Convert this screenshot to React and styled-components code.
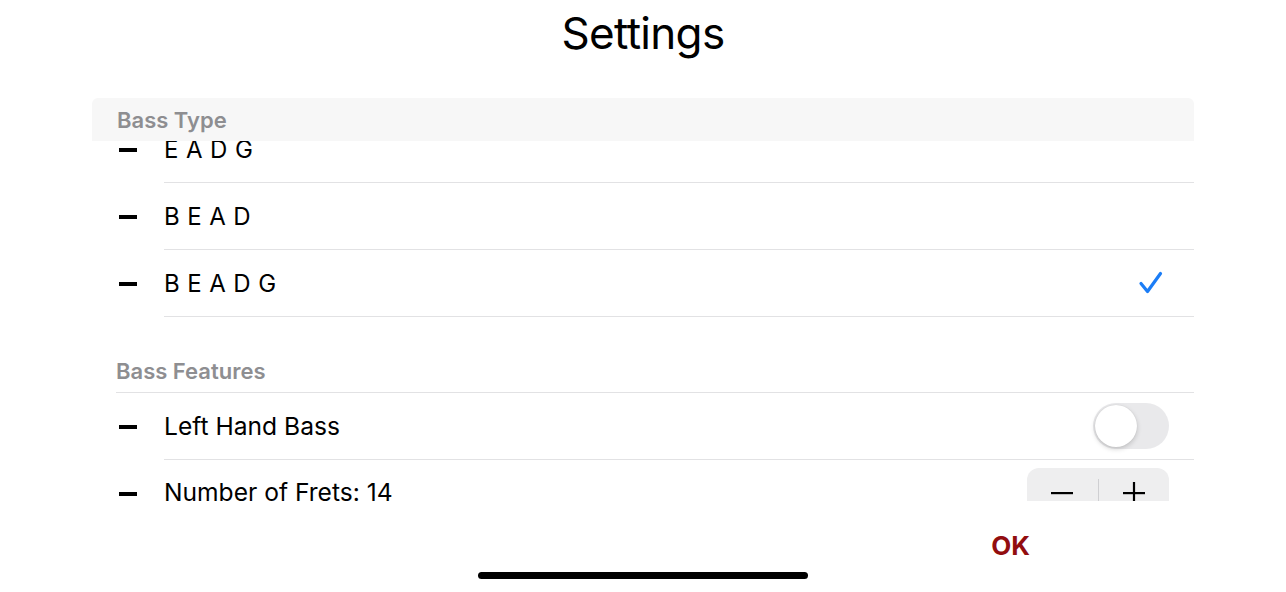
import React from "react";
import styled, { createGlobalStyle } from "styled-components";

const Global = createGlobalStyle`
  html, body { margin: 0; padding: 0; background: #ffffff; }
  body { font-family: "Inter", "Noto Sans", "Liberation Sans", sans-serif; -webkit-font-smoothing: antialiased; }
  * { box-sizing: border-box; }
`;

const Page = styled.div`
  width: 1286px;
  height: 592px;
  display: flex;
  flex-direction: column;
  background: #fff;
  overflow: hidden;
`;

const TitleBar = styled.header`
  height: 98px;
  display: flex;
  justify-content: center;
  padding-top: 6px;
`;

const Title = styled.h1`
  margin: 0;
  font-size: 44px;
  font-weight: 400;
  line-height: 54px;
  letter-spacing: -0.7px;
  color: #000;
`;

const ListArea = styled.section`
  margin: 0 92px;
  height: 403px;
  flex: none;
  display: flex;
  flex-direction: column;
  overflow: hidden;
`;

const StickyHeader = styled.div`
  height: 43px;
  flex: none;
  background: #f7f7f7;
  border-radius: 6px 6px 0 0;
  padding-left: 25px;
  display: flex;
  align-items: center;
  font-size: 22px;
  font-weight: 600;
  color: #8e8e91;
  position: relative;
  z-index: 1;
`;

const Clip = styled.div`
  flex: 1;
  overflow: hidden;
`;

const Content = styled.div`
  margin-top: -25px;
`;

const Row = styled.div`
  height: 67px;
  display: flex;
`;

const DashCell = styled.div`
  width: 72px;
  flex: none;
  display: flex;
  align-items: center;
  padding-left: 27px;
`;

const Dash = styled.span`
  width: 18px;
  height: 4px;
  background: #000;
  display: block;
`;

const RowBody = styled.div`
  flex: 1;
  display: flex;
  align-items: center;
  justify-content: space-between;
  border-bottom: 1px solid #e2e2e4;
  padding-right: ${(p) => p.$pr || 25}px;
`;

const Label = styled.span`
  font-size: ${(p) => (p.$spaced ? "24px" : "24.6px")};
  line-height: 30px;
  color: #000;
  letter-spacing: ${(p) => (p.$spaced ? "0.4px" : "0")};
  white-space: pre;
  margin-top: ${(p) => (p.$up ? "-2px" : p.$spaced ? "2px" : "0")};
`;

const SectionHeader = styled.div`
  height: 76px;
  margin-left: 24px;
  border-bottom: 1px solid #e2e2e4;
  display: flex;
  align-items: flex-end;
  padding-bottom: 8px;
  font-size: 22px;
  font-weight: 600;
  color: #8e8e91;
`;

const Toggle = styled.div`
  width: 76px;
  height: 46px;
  border-radius: 23px;
  background: #e9e9eb;
  padding: 2px;
  display: flex;
`;

const Knob = styled.div`
  width: 42px;
  height: 42px;
  border-radius: 50%;
  background: #fff;
  box-shadow: 0 2px 5px rgba(0, 0, 0, 0.18), 0 0 1px rgba(0, 0, 0, 0.12);
`;

const Stepper = styled.div`
  width: 142px;
  height: 50px;
  border-radius: 12px;
  background: #eeeeef;
  display: flex;
  align-items: center;
`;

const StepButton = styled.button`
  flex: 1;
  height: 100%;
  border: none;
  background: transparent;
  display: flex;
  align-items: center;
  justify-content: center;
  padding: 0;
`;

const StepDivider = styled.span`
  width: 1px;
  height: 28px;
  background: #cfcfd2;
`;

const Footer = styled.footer`
  flex: 1;
  display: flex;
  flex-direction: column;
`;

const ButtonRow = styled.div`
  display: flex;
  justify-content: flex-end;
  padding-right: 256px;
  padding-top: 29px;
`;

const OkButton = styled.button`
  border: none;
  background: transparent;
  padding: 0;
  font-family: inherit;
  font-size: 26px;
  font-weight: 700;
  line-height: 32px;
  color: #920d0f;
`;

const HomeIndicator = styled.div`
  width: 330px;
  height: 7px;
  border-radius: 4px;
  background: #000;
  margin: 10px auto 0;
`;

const Check = () => (
  <svg width="26" height="24" viewBox="0 0 26 24">
    <path d="M3 12.5 L9.5 20.5 L22.5 2.5" fill="none" stroke="#1b7df6" strokeWidth="3.2" strokeLinecap="round" strokeLinejoin="round" />
  </svg>
);

const Minus = () => (
  <svg width="22" height="4" viewBox="0 0 22 4">
    <rect x="0" y="1" width="22" height="2.2" fill="#000" />
  </svg>
);

const Plus = () => (
  <svg width="22" height="22" viewBox="0 0 22 22">
    <rect x="0" y="10" width="22" height="2.2" fill="#000" />
    <rect x="9.9" y="0" width="2.2" height="22" fill="#000" />
  </svg>
);

const bassTypes = [
  { label: "E A D G", checked: false },
  { label: "B E A D", checked: false },
  { label: "B E A D G", checked: true },
];

export default function App() {
  return (
    <Page>
      <Global />
      <TitleBar>
        <Title>Settings</Title>
      </TitleBar>
      <ListArea>
        <StickyHeader>Bass Type</StickyHeader>
        <Clip>
          <Content>
            {bassTypes.map((t) => (
              <Row key={t.label}>
                <DashCell><Dash /></DashCell>
                <RowBody $pr={30}>
                  <Label $spaced>{t.label}</Label>
                  {t.checked && <Check />}
                </RowBody>
              </Row>
            ))}
            <SectionHeader>Bass Features</SectionHeader>
            <Row>
              <DashCell><Dash /></DashCell>
              <RowBody>
                <Label>Left Hand Bass</Label>
                <Toggle><Knob /></Toggle>
              </RowBody>
            </Row>
            <Row>
              <DashCell><Dash /></DashCell>
              <RowBody>
                <Label $up>Number of Frets: 14</Label>
                <Stepper>
                  <StepButton aria-label="decrease"><Minus /></StepButton>
                  <StepDivider />
                  <StepButton aria-label="increase"><Plus /></StepButton>
                </Stepper>
              </RowBody>
            </Row>
          </Content>
        </Clip>
      </ListArea>
      <Footer>
        <ButtonRow>
          <OkButton>OK</OkButton>
        </ButtonRow>
        <HomeIndicator />
      </Footer>
    </Page>
  );
}
